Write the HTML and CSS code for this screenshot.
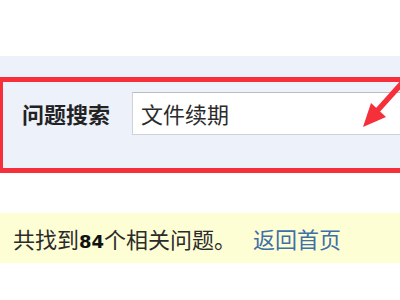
FILE: index.html
```html
<!DOCTYPE html>
<html lang="zh-CN">
<head>
<meta charset="utf-8">
<link rel="stylesheet" href="styles.css">
</head>
<body>
<div class="page">
  <div class="top-space"></div>
  <div class="search-panel">
    <div class="highlight-box">
      <span class="search-label">问题搜索</span>
      <div class="search-input">文件续期</div>
    </div>
  </div>
  <div class="result-bar">
    <span class="result-text">共找到<b class="count">84</b>个相关问题。</span>
    <a class="home-link" href="#">返回首页</a>
  </div>
  <svg class="arrow" width="60" height="70" viewBox="340 70 60 70">
    <line x1="377" y1="111" x2="412" y2="72" stroke="#f5303a" stroke-width="5.5"/>
    <polygon points="363,127 386,117 371,103" fill="#f5303a"/>
  </svg>
</div>
</body>
</html>
```

FILE: styles.css
```css
html, body {
  margin: 0;
  padding: 0;
  background: #ffffff;
  overflow: hidden;
}

.page {
  position: relative;
  width: 400px;
  height: 300px;
  overflow: hidden;
  font-family: "Noto Sans CJK SC", "Noto Sans", sans-serif;
  color: #2b2b2b;
}

.top-space {
  height: 56px;
}

.search-panel {
  background: #edf1fa;
  padding-top: 21px;
  width: 400px;
}

.highlight-box {
  box-sizing: border-box;
  height: 96px;
  width: 440px;
  border: 5px solid #f5303a;
  border-right: none;
  border-left-width: 3px;
  display: flex;
  align-items: flex-start;
  padding: 10px 0 0 19px;
}

.search-label {
  font-size: 22px;
  font-weight: bold;
  line-height: 43px;
  width: 110px;
  color: #222;
}

.search-input {
  box-sizing: border-box;
  height: 43px;
  flex: 1;
  background: #ffffff;
  border: 1px solid #cfd3d8;
  border-top-color: #b9bdc2;
  font-size: 22px;
  line-height: 41px;
  padding-left: 8px;
  color: #2b2b2b;
}

.result-bar {
  margin-top: 40px;
  height: 50px;
  background: #fefed5;
  display: flex;
  align-items: center;
  padding-left: 13px;
  font-size: 22px;
}

.count {
  font-family: "DejaVu Sans", sans-serif;
  font-weight: bold;
  font-size: 18px;
  color: #111;
}

.home-link {
  margin-left: 17px;
  color: #3f6fa8;
  text-decoration: none;
}

.arrow {
  position: absolute;
  left: 340px;
  top: 70px;
}
```
